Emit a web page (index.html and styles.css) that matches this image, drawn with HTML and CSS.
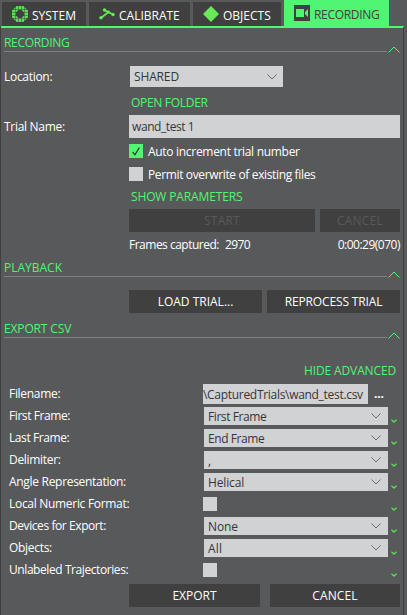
FILE: index.html
```html
<!DOCTYPE html>
<html lang="en">
<head><meta charset="utf-8"><title>Recording</title><link rel="stylesheet" href="styles.css"></head>
<body>
<svg class="defs" width="0" height="0">
  <symbol id="up" viewBox="0 0 12 7"><path d="M.5 6.500 6 1l5.500 5.500"/></symbol>
  <symbol id="down" viewBox="0 0 10 6"><path d="M.5.5 5 5l4.500-4.500"/></symbol>
  <symbol id="more" viewBox="0 0 6 4"><path d="M.4.700 3 3 5.600.700"/></symbol>
</svg>
<nav class="tabs">
  <div class="tab system"><svg width="16" height="16" viewBox="0 0 16 16"><path class="ring" d="M5.500 2h5l3.500 3.500v5L10.500 14h-5L2 10.500v-5z"/><path class="grid" d="M0 3.500H16M0 6.500H16M0 9.500H16M0 12.500H16M3.500 0V16M6.500 0V16M9.500 0V16M12.500 0V16"/></svg><span class="t0">SYSTEM</span></div>
  <div class="tab calibrate"><svg width="16" height="12" viewBox="0 0 16 12"><path class="bone" d="M5.500 2 14 6.500M9.500 4 2 10"/><g class="joint"><circle cx="5.500" cy="2" r="1.700"/><circle cx="9.500" cy="4" r="1.500"/><circle cx="2" cy="9.800" r="1.700"/><circle cx="14" cy="6.500" r="1.700"/></g></svg><span class="t0">CALIBRATE</span></div>
  <div class="tab objects"><svg width="16" height="16" viewBox="0 0 16 16"><path class="joint" d="M8 0l8 8-8 8-8-8z"/></svg><span class="t0">OBJECTS</span></div>
  <div class="tab active"><svg width="16" height="16" viewBox="0 0 16 16"><path class="dark" d="M0 0h16v16H0z"/><path class="cam" d="M2 4h8v8H2zM11 7l3-3v8l-3-3z"/></svg><span class="t2">RECORDING</span></div>
</nav>
<main class="panel">
  <header class="section"><h2 class="t2">RECORDING</h2><svg class="up"><use href="#up"/></svg></header>
  <section class="recording">
    <div class="row location"><label class="t2">Location:</label><div class="select"><span class="t1">SHARED</span><svg class="down"><use href="#down"/></svg></div></div>
    <div class="link open t2">OPEN FOLDER</div>
    <div class="row trial"><label class="t2">Trial Name:</label><div class="input t3">wand_test 1</div></div>
    <div class="check"><i class="box on"><svg width="8" height="9" viewBox="0 0 8 9"><path d="M.7 5 3 7.800 7.300.600"/></svg></i><span class="t2">Auto increment trial number</span></div>
    <div class="check second"><i class="box"></i><span class="permit">Permit overwrite of existing files</span></div>
    <div class="link show t1">SHOW PARAMETERS</div>
    <div class="buttons record"><div class="button off">START</div><div class="button off">CANCEL</div></div>
    <div class="status"><span class="frames">Frames captured:</span><span class="count">2970</span><span class="time">0:00:29(070)</span></div>
  </section>
  <header class="section playback"><h2 class="t0">PLAYBACK</h2><svg class="up"><use href="#up"/></svg></header>
  <div class="buttons play"><div class="button t0">LOAD TRIAL...</div><div class="button t1">REPROCESS TRIAL</div></div>
  <header class="section csv"><h2 class="t1">EXPORT CSV</h2><svg class="up"><use href="#up"/></svg></header>
  <section class="export">
    <div class="link hide t1">HIDE ADVANCED</div>
    <div class="field file"><label class="t2">Filename:</label><div class="path t2">\CapturedTrials\wand_test.csv</div><span class="browse">...</span></div>
    <div class="field"><label class="t3">First Frame:</label><div class="select"><span class="t3">First Frame</span><svg class="down"><use href="#down"/></svg></div><svg class="more"><use href="#more"/></svg></div>
    <div class="field"><label class="t3">Last Frame:</label><div class="select"><span class="t3">End Frame</span><svg class="down"><use href="#down"/></svg></div><svg class="more"><use href="#more"/></svg></div>
    <div class="field"><label class="t2">Delimiter:</label><div class="select"><span>,</span><svg class="down"><use href="#down"/></svg></div><svg class="more"><use href="#more"/></svg></div>
    <div class="field"><label class="t2">Angle Representation:</label><div class="select"><span class="t1">Helical</span><svg class="down"><use href="#down"/></svg></div><svg class="more"><use href="#more"/></svg></div>
    <div class="field"><label class="t2">Local Numeric Format:</label><i class="box"></i><svg class="more"><use href="#more"/></svg></div>
    <div class="field"><label class="t3">Devices for Export:</label><div class="select"><span class="t1">None</span><svg class="down"><use href="#down"/></svg></div><svg class="more"><use href="#more"/></svg></div>
    <div class="field"><label class="t2">Objects:</label><div class="select"><span class="t5">All</span><svg class="down"><use href="#down"/></svg></div><svg class="more"><use href="#more"/></svg></div>
    <div class="field"><label class="t3">Unlabeled Trajectories:</label><i class="box"></i><svg class="more"><use href="#more"/></svg></div>
    <div class="buttons final"><div class="button t0">EXPORT</div><div class="button t5">CANCEL</div></div>
  </section>
</main>
</body>
</html>
```
FILE: styles.css
```css
* { box-sizing: border-box; }
body { margin: 0; width: 407px; height: 615px; overflow: hidden; background: #58595b; color: #fff; font: 12px/18px "Open Sans", "Noto Sans", sans-serif; white-space: nowrap; }
svg { display: block; flex: none; fill: none; }
.defs { position: absolute; }
.t0 { letter-spacing: 0; }
.t1 { letter-spacing: -.14px; }
.t2 { letter-spacing: -.3px; }
.t3 { letter-spacing: -.42px; }
.t5 { letter-spacing: .15px; }

.tabs { display: flex; height: 26px; padding-left: 2px; gap: 3px; }
.tab { display: flex; align-items: center; height: 24px; margin-top: 2px; background: #404041; }
.tab span { line-height: 18px; margin-top: 4px; }
.system { width: 84px; padding-left: 10px; gap: 4px; }
.calibrate { width: 101px; padding-left: 10px; gap: 4px; }
.objects { width: 88px; padding-left: 10px; gap: 4px; }
.active { width: 105px; height: 26px; margin: 0; padding-left: 10px; gap: 4px; background: #51f574; color: #404041; }
.ring { stroke: #5ce053; stroke-width: 4; }
.grid { stroke: #404041; stroke-width: .5; }
.bone { stroke: #62e554; stroke-width: 1.8; }
.joint { fill: #66ea57; }
.dark { fill: #404041; }
.cam { fill: #51f574; }

.panel { width: 403px; height: 589px; margin-left: 1px; padding: 0 3px; border-top: 2px solid #51f574; border-right: 1px solid #3f3f41; box-shadow: -1px 0 #404041; }
.section { display: flex; justify-content: space-between; height: 25px; background: linear-gradient(#808183, #808183) left 23px / 383px 1px no-repeat; }
h2 { margin: 0; padding-top: 6px; font-size: 12px; font-weight: 400; line-height: 18px; color: #51f574; }
.up { width: 12px; height: 7px; margin-top: 18px; stroke: #51f574; }
.down { width: 10px; height: 6px; stroke: #6c6d70; }
.more { width: 6px; height: 4px; stroke: #5bdc52; stroke-width: 1.4; }
.link { color: #51f574; }
.select { display: flex; align-items: center; justify-content: space-between; background: #d1d2d4; color: #353638; padding: 0 7px 0 4px; }
.select span { padding-top: 2px; }
.box { display: flex; align-items: center; justify-content: center; width: 14px; height: 14px; background: #d1d2d4; }
.on { background: #51f574; }
.on path { stroke: #303433; stroke-width: 1.2; }
.button { display: flex; align-items: center; justify-content: center; height: 23px; background: #404041; }
.off { color: #58595b; letter-spacing: .2px; }
.buttons { display: grid; margin-left: 125px; }

.row { display: grid; grid-template-columns: 126px 1fr; align-items: center; }
.location { height: 21px; margin-top: 13px; }
.location label { padding-top: 1px; }
.location .select { width: 153px; height: 21px; padding-right: 6px; }
.location .select span { padding-top: 1px; }
.open { margin: 7px 0 0 127px; }
.trial { grid-template-columns: 125px 271px; height: 23px; margin-top: 3px; }
.input { height: 23px; line-height: 23px; padding-left: 3px; background: #d1d2d4; color: #353638; }
.check { display: flex; align-items: center; gap: 5px; height: 14px; margin: 6px 0 0 125px; }
.check span { padding-top: 2px; }
.permit { letter-spacing: -.36px; }
.second { margin-top: 9px; }
.show { margin: 7px 0 0 127px; }
.record { grid-template-columns: 186px 80px; gap: 5px; margin-top: 3px; }
.status { display: flex; height: 17px; margin: 4px 0 0 125px; }
.frames { letter-spacing: -.5px; }
.count { margin-left: 6px; letter-spacing: -.6px; }
.time { margin-left: auto; letter-spacing: -.5px; }
.play { grid-template-columns: 133px 133px; gap: 5px; margin-top: 12px; }
.csv { margin-top: 1px; }
.export { padding-left: 5px; }
.hide { height: 17px; margin: 23px 4px 0 0; text-align: right; }
.field { display: grid; grid-template-columns: 192px 184px 6px; column-gap: 3px; align-items: center; height: 22px; }
.field .select { height: 18px; }
.field .box { margin-left: -1px; }
.field .more { margin-top: 9px; }
.file { grid-template-columns: 191px 165px 12px; margin-top: 4px; }
.path { height: 20px; line-height: 21px; background: #d1d2d4; color: #353638; overflow: hidden; }
.browse { padding-left: 3px; font-weight: 700; letter-spacing: -.2px; }
.final { grid-template-columns: 131px 130px; gap: 10px; margin: 3px 0 0 120px; }
```
